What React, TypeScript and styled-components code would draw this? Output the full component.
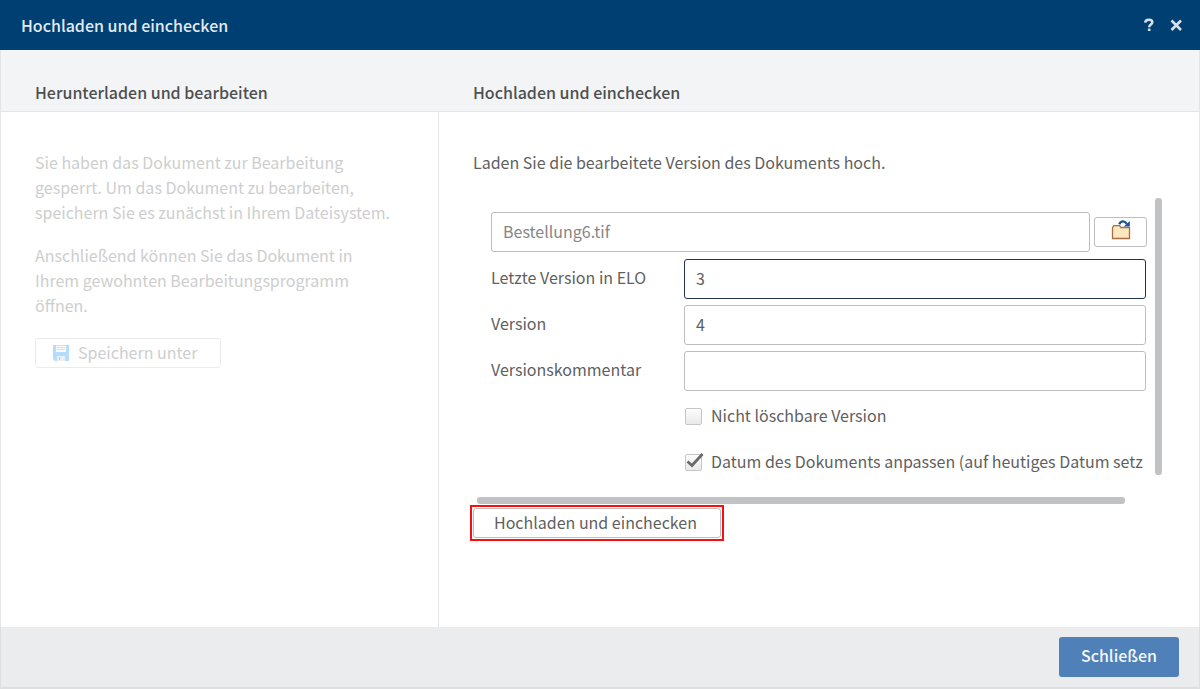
import React from "react";
import styled, { createGlobalStyle } from "styled-components";

const GlobalStyle = createGlobalStyle`
  *, *::before, *::after { box-sizing: border-box; }
  body { margin: 0; background: #fff; }
  body, button, input {
    font-family: "Noto Sans CJK SC", "Noto Sans", sans-serif;
    font-size: 16px;
    line-height: 25px;
    color: #5f5f5f;
  }
  h1, h2, p { margin: 0; }
`;

const Dialog = styled.div`
  display: flex;
  flex-direction: column;
  min-height: 100vh;
`;

const TitleBar = styled.header`
  display: flex;
  align-items: center;
  gap: 13px;
  height: 50px;
  padding: 0 17px 0 21px;
  background: #003f72;
`;

const Title = styled.h1`
  flex: 1;
  font-size: 16px;
  font-weight: 500;
  color: #e3ebf1;
`;

const TitleButton = styled.button`
  display: flex;
  padding: 0;
  border: 0;
  background: none;
`;

const Columns = styled.main`
  flex: 1;
  display: grid;
  grid-template-columns: 438px minmax(0, 1fr);
  grid-template-rows: auto 1fr;
  border: solid #e4e5e7;
  border-width: 0 1px;
`;

const ColumnHeading = styled.h2`
  height: 62px;
  padding: 30px 34px 0;
  border-bottom: 1px solid #e4e5e7;
  background: #f3f4f6;
  font-size: 16px;
  font-weight: 500;
  color: #4f4f4f;
`;

const Column = styled.section<{ $divided?: boolean }>`
  padding: ${(p) => (p.$divided ? "38px 40px 38px 34px" : "38px 34px")};
  border-right: ${(p) => (p.$divided ? "1px solid #e4e5e7" : "0")};
`;

const Hint = styled.p`
  margin-bottom: 18px;
  color: #cecece;
`;

const Button = styled.button<{ $minWidth?: number }>`
  display: flex;
  align-items: center;
  gap: 9px;
  min-width: ${(p) => p.$minWidth ?? 0}px;
  height: 30px;
  padding: 0 20px;
  border: 1px solid #bdbdbd;
  border-radius: 3px;
  background: #fff;

  &:disabled {
    margin-top: 20px;
    padding: 0 17px;
    border-color: #ebebeb;
    color: #cecece;
  }
`;

const Caption = styled.span`
  padding-bottom: 2px;
`;

const Highlight = styled.div`
  width: fit-content;
  margin-left: -3px;
  padding: 1px;
  border: 2px solid #f90f0f;
`;

const ScrollFrame = styled.div`
  display: grid;
  grid-template-columns: minmax(0, 1fr) 7px;
  gap: 22px 5px;
  margin: 23px 3px 1px 0;
`;

const Viewport = styled.form`
  height: 277px;
  padding: 14px 3px 0 18px;
  overflow: hidden;
`;

const VerticalBar = styled.div`
  border-radius: 3px;
  background: #c1c2c4;
`;

const HorizontalBar = styled.div`
  height: 7px;
  margin: 0 25px 0 4px;
  border-radius: 3px;
  background: #c1c2c4;
`;

const FileRow = styled.div`
  display: flex;
  align-items: center;
  gap: 4px;
  margin-bottom: 7px;
`;

const FieldRow = styled.div`
  display: grid;
  grid-template-columns: 193px minmax(0, 1fr);
  align-items: center;
  margin: 0 1px 6px 0;
`;

const FieldLabel = styled.label`
  padding-bottom: 3px;
`;

const TextInput = styled.input<{ $active?: boolean; $muted?: boolean }>`
  flex: 1;
  min-width: 0;
  height: 40px;
  padding: 0 11px 3px;
  border: 1px solid ${(p) => (p.$active ? "#1f3552" : "#bdbdbd")};
  border-radius: 3px;
  background: #fff;
  color: ${(p) => (p.$muted ? "#868686" : "#5f5f5f")};
  outline: none;
`;

const BrowseButton = styled(Button)`
  justify-content: center;
  width: 53px;
  padding: 0 0 4px;
`;

const CheckRow = styled.label`
  display: flex;
  align-items: center;
  gap: 9px;
  height: 40px;
  margin: 0 0 6px 194px;
  padding-bottom: 1px;
  white-space: nowrap;
`;

const CheckMark = styled.svg`
  position: absolute;
  left: 0;
  top: -2px;
  pointer-events: none;
`;

const CheckBox = styled.span`
  position: relative;
  display: flex;
  flex: none;
`;

const CheckInput = styled.input`
  appearance: none;
  width: 17px;
  height: 17px;
  margin: 0;
  border: 1px solid #c6c6c6;
  border-radius: 2px;
  background: linear-gradient(#fdfdfd, #e9e9e9);
`;

const Footer = styled.footer`
  display: flex;
  justify-content: flex-end;
  height: 62px;
  padding: 10px 20px;
  border: solid #dddfe1;
  border-width: 0 1px 2px;
  background: #ebecee;
`;

const CloseButton = styled.button`
  width: 120px;
  height: 40px;
  padding: 0 0 3px;
  border: 0;
  border-radius: 3px;
  background: #5080b8;
  color: #f4f8fc;
  font-weight: 500;
`;

const HelpIcon = () => (
  <svg width="14" height="16" viewBox="0 0 14 16" fill="none" stroke="#d6e1ea">
    <path d="M3.200 5.600C3.400 3.300 5 2.800 7 2.800c2.100 0 3.300.9 3.300 2.500 0 2.300-3.100 2.200-3.100 4.900" strokeWidth="2.500" />
    <path d="M7.200 11.600v2.400" strokeWidth="2.600" />
  </svg>
);

const CloseIcon = () => (
  <svg width="14" height="16" viewBox="0 0 14 16" fill="none" stroke="#d6e1ea" strokeWidth="2.600">
    <path d="M2.500 3.500l9.500 9.500M12 3.500L2.500 13" />
  </svg>
);

const DiskIcon = () => (
  <svg width="16" height="16" viewBox="0 0 16 16">
    <path d="M0 0h16v16H2l-2-2z" fill="#b5dcfd" />
    <path d="M3 1h10v6H3z" fill="#fafafa" />
    <path d="M3 .5h10M4 2.500h8M4 4.500h8" stroke="#dedede" />
    <path d="M4 11h8v5H4z" fill="#eceff1" />
    <path d="M6 12h1v3H6z" fill="#a9cdec" />
  </svg>
);

const FolderIcon = () => (
  <svg width="20" height="20" viewBox="0 0 20 20">
    <path d="M1.500 18.500V7.500l1.500-1.800h5.500l1.500 1.800h8.500v11z" fill="#fde7c0" stroke="#a66f44" strokeWidth="1.300" />
    <path d="M8.200 4.200C10 .6 13.600.6 15.800 3.800" fill="none" stroke="#1f5299" strokeWidth="2.300" />
    <path d="M18.800 1v5.600h-6z" fill="#1f5299" />
  </svg>
);

export default function App() {
  return (
    <>
      <GlobalStyle />
      <Dialog>
        <TitleBar>
          <Title>Hochladen und einchecken</Title>
          <TitleButton aria-label="Hilfe"><HelpIcon /></TitleButton>
          <TitleButton aria-label="Dialog schließen"><CloseIcon /></TitleButton>
        </TitleBar>
        <Columns>
          <ColumnHeading>Herunterladen und bearbeiten</ColumnHeading>
          <ColumnHeading>Hochladen und einchecken</ColumnHeading>
          <Column $divided>
            <Hint>
              Sie haben das Dokument zur Bearbeitung gesperrt. Um das Dokument zu bearbeiten,
              speichern Sie es zunächst in Ihrem Dateisystem.
            </Hint>
            <Hint>
              Anschließend können Sie das Dokument in Ihrem gewohnten Bearbeitungsprogramm öffnen.
            </Hint>
            <Button disabled $minWidth={186}>
              <DiskIcon />
              <Caption>Speichern unter</Caption>
            </Button>
          </Column>
          <Column>
            <p>Laden Sie die bearbeitete Version des Dokuments hoch.</p>
            <ScrollFrame>
              <Viewport>
                <FileRow>
                  <TextInput $muted aria-label="Datei" defaultValue="Bestellung6.tif" />
                  <BrowseButton type="button" aria-label="Datei auswählen"><FolderIcon /></BrowseButton>
                </FileRow>
                <FieldRow>
                  <FieldLabel htmlFor="last">Letzte Version in ELO</FieldLabel>
                  <TextInput id="last" $active defaultValue="3" />
                </FieldRow>
                <FieldRow>
                  <FieldLabel htmlFor="version">Version</FieldLabel>
                  <TextInput id="version" defaultValue="4" />
                </FieldRow>
                <FieldRow>
                  <FieldLabel htmlFor="comment">Versionskommentar</FieldLabel>
                  <TextInput id="comment" />
                </FieldRow>
                <CheckRow>
                  <CheckBox><CheckInput type="checkbox" /></CheckBox>
                  <Caption>Nicht löschbare Version</Caption>
                </CheckRow>
                <CheckRow>
                  <CheckBox>
                    <CheckInput type="checkbox" defaultChecked />
                    <CheckMark width="20" height="18" viewBox="0 0 20 18">
                      <path d="M2.500 9.500l4.500 4L17.500 2" fill="none" stroke="#6a6a6a" strokeWidth="2.800" />
                    </CheckMark>
                  </CheckBox>
                  <Caption>Datum des Dokuments anpassen (auf heutiges Datum setz</Caption>
                </CheckRow>
              </Viewport>
              <VerticalBar />
              <HorizontalBar />
            </ScrollFrame>
            <Highlight>
              <Button $minWidth={248}>
                <Caption>Hochladen und einchecken</Caption>
              </Button>
            </Highlight>
          </Column>
        </Columns>
        <Footer>
          <CloseButton>Schließen</CloseButton>
        </Footer>
      </Dialog>
    </>
  );
}
